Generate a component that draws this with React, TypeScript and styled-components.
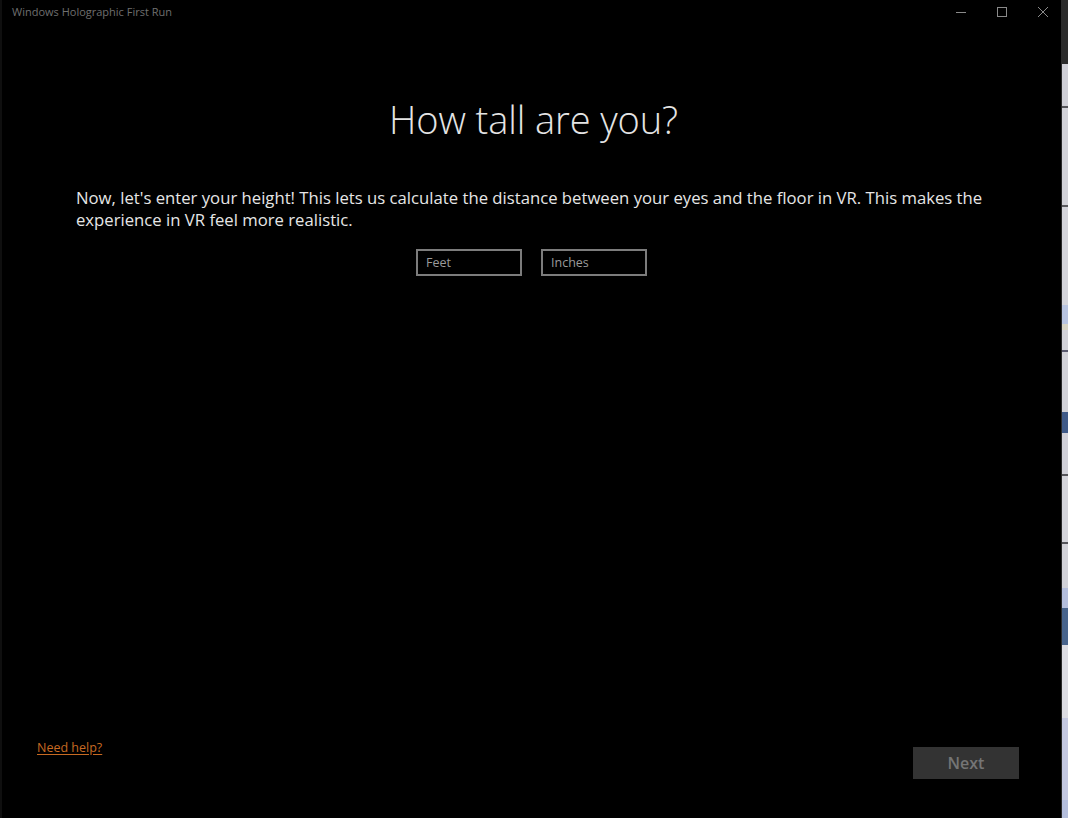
import React from 'react';
import styled, { createGlobalStyle } from 'styled-components';

const GlobalStyle = createGlobalStyle`
  html, body {
    margin: 0;
    padding: 0;
    background: #000;
  }
  * {
    box-sizing: border-box;
  }
`;

const Desktop = styled.div`
  display: flex;
  width: 100vw;
  height: 100vh;
  overflow: hidden;
  font-family: 'Open Sans', 'Noto Sans', sans-serif;
`;

const Window = styled.div`
  flex: 1;
  display: flex;
  flex-direction: column;
  background: #000;
  border-left: 2px solid #0f0f0f;
  border-right: 1px solid #2a2a2a;
`;

const TitleBar = styled.div`
  height: 32px;
  display: flex;
  align-items: center;
  padding-left: 10px;
`;

const Title = styled.span`
  flex: 1;
  font-size: 11px;
  color: #6f6f6f;
  margin-top: -10px;
`;

const Controls = styled.div`
  display: flex;
  height: 100%;
  align-items: flex-start;
  margin-right: -2px;
`;

const ControlButton = styled.div`
  width: 41px;
  height: 24px;
  display: flex;
  align-items: center;
  justify-content: center;
  color: #8a8a8a;
`;

const Content = styled.main`
  flex: 1;
  display: flex;
  flex-direction: column;
  padding: 62px 70px 0 74px;
`;

const Heading = styled.h1`
  margin: 0;
  text-align: center;
  font-weight: 300;
  font-size: 38px;
  line-height: 50px;
  color: #e4e4e4;
  letter-spacing: -0.1px;
`;

const Lead = styled.p`
  margin: 43px 0 0;
  font-size: 16.7px;
  line-height: 22px;
  color: #e6e6e6;
`;

const Fields = styled.div`
  display: flex;
  justify-content: center;
  gap: 19px;
  margin-top: 18px;
  padding-right: 4px;
`;

const Field = styled.input`
  width: 106px;
  height: 27px;
  background: #000;
  border: 2px solid #7c7c7c;
  padding: 0 8px;
  font-family: inherit;
  font-size: 12.5px;
  color: #ccc;
  outline: none;

  &::placeholder {
    color: #9b9b9b;
  }
`;

const Footer = styled.footer`
  display: flex;
  align-items: center;
  justify-content: space-between;
  padding: 0 42px 39px 35px;
`;

const HelpLink = styled.a`
  font-size: 12.5px;
  color: #c76a22;
  text-decoration: underline;
  text-underline-offset: 2px;
  margin-top: -32px;
`;

const NextButton = styled.button`
  width: 106px;
  height: 32px;
  border: none;
  background: #333333;
  color: #757575;
  font-family: inherit;
  font-weight: 600;
  font-size: 16px;
`;

const BackdropStrip = styled.div`
  width: 6px;
  background: linear-gradient(
    to bottom,
    #2b2b2b 0px,
    #2b2b2b 64px,
    #cfcfd6 64px,
    #cfcfd6 106px,
    #55555a 106px,
    #55555a 108px,
    #d2d2d8 108px,
    #d2d2d8 205px,
    #5a5a5e 205px,
    #5a5a5e 207px,
    #d4d4da 207px,
    #d4d4da 305px,
    #b8c4e0 305px,
    #b8c4e0 324px,
    #d8d4c4 324px,
    #d8d4c4 330px,
    #d2d2d8 330px,
    #d2d2d8 350px,
    #5a5a6e 350px,
    #5a5a6e 352px,
    #d2d2d8 352px,
    #d2d2d8 412px,
    #3f5a88 412px,
    #3f5a88 433px,
    #d0d0d8 433px,
    #d0d0d8 474px,
    #55555a 474px,
    #55555a 476px,
    #d4d4da 476px,
    #d4d4da 542px,
    #55555a 542px,
    #55555a 544px,
    #d2d2d8 544px,
    #d2d2d8 588px,
    #b4bedc 588px,
    #b4bedc 608px,
    #48648c 608px,
    #48648c 645px,
    #dcdce2 645px,
    #dcdce2 718px,
    #c4c8e0 718px,
    #c4c8e0 800px,
    #b4bedc 800px
  );
`;

const MinimizeIcon = () => (
  <svg width="10" height="10" viewBox="0 0 10 10">
    <path d="M0 5.5h10" stroke="currentColor" strokeWidth="1" />
  </svg>
);

const MaximizeIcon = () => (
  <svg width="10" height="10" viewBox="0 0 10 10">
    <rect x="0.5" y="0.5" width="9" height="9" fill="none" stroke="currentColor" strokeWidth="1" />
  </svg>
);

const CloseIcon = () => (
  <svg width="10" height="10" viewBox="0 0 10 10">
    <path d="M0 0L10 10M10 0L0 10" stroke="currentColor" strokeWidth="1" />
  </svg>
);

export default function App() {
  return (
    <>
      <GlobalStyle />
      <Desktop>
        <Window>
          <TitleBar>
            <Title>Windows Holographic First Run</Title>
            <Controls>
              <ControlButton><MinimizeIcon /></ControlButton>
              <ControlButton><MaximizeIcon /></ControlButton>
              <ControlButton><CloseIcon /></ControlButton>
            </Controls>
          </TitleBar>
          <Content>
            <Heading>How tall are you?</Heading>
            <Lead>
              Now, let's enter your height! This lets us calculate the distance between your eyes and the floor in VR. This makes the experience in VR feel more realistic.
            </Lead>
            <Fields>
              <Field placeholder="Feet" />
              <Field placeholder="Inches" />
            </Fields>
          </Content>
          <Footer>
            <HelpLink href="#">Need help?</HelpLink>
            <NextButton>Next</NextButton>
          </Footer>
        </Window>
        <BackdropStrip />
      </Desktop>
    </>
  );
}
